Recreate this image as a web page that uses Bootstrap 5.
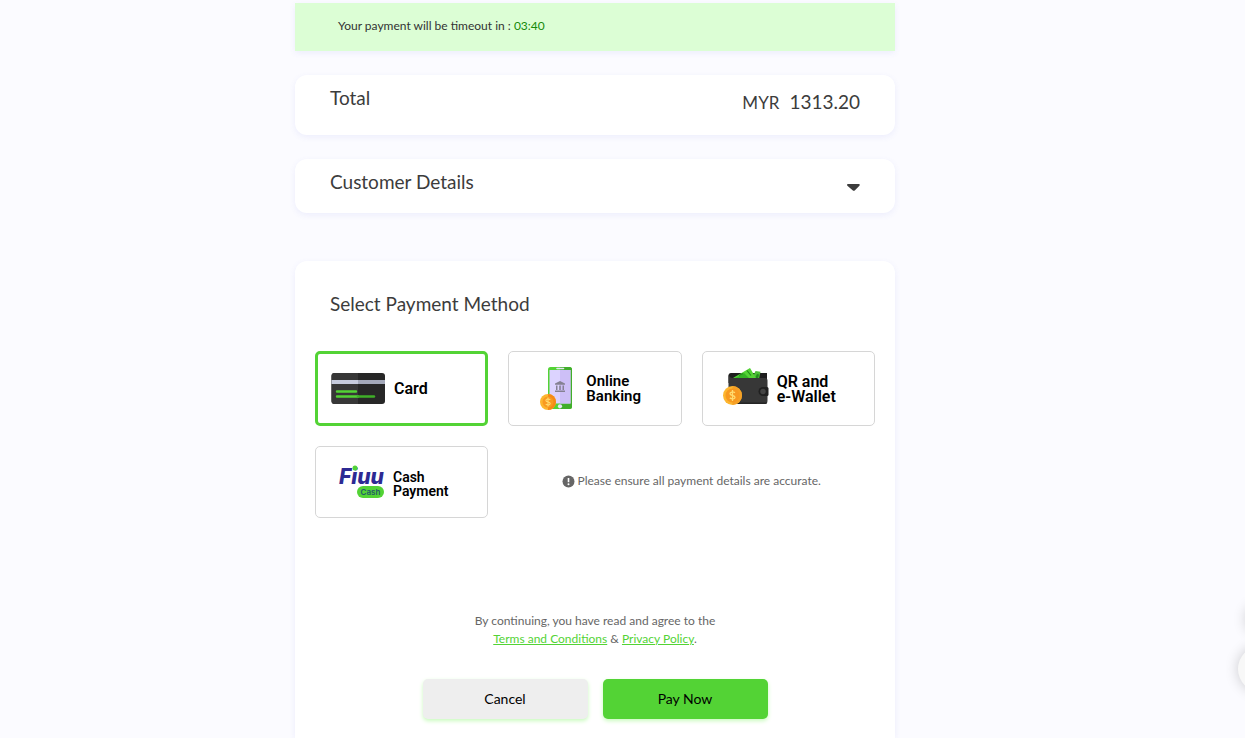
<!DOCTYPE html>
<html lang="en">
<head>
<meta charset="utf-8">
<meta name="viewport" content="width=device-width, initial-scale=1">
<title>Payment</title>
<link href="https://cdn.jsdelivr.net/npm/bootstrap@5.3.0/dist/css/bootstrap.min.css" rel="stylesheet">
<style>
  body { background: #fbfbff; color: #3c3c3c; font-family: Lato, "Liberation Sans", sans-serif; font-size: 12px; line-height: 18px; }
  .page { padding: 3px 55px 0 0; }
  .column { width: 100%; max-width: 600px; }
  .panel { background: #fff; border-radius: 12px; box-shadow: 0 2px 6px rgba(90, 100, 220, .09); }
  .timeout { background: #dcfed5; border-radius: 0; padding: 14px 43px; color: #333; min-height: 48px; }
  .timeout time { color: #168a0a; }
  .heading { font-size: 19px; line-height: 26px; font-weight: 400; margin: 0; }
  .total { padding: 10px 35px 16px; min-height: 60px; }
  .total .currency { font-size: 17px; margin-right: 10px; }
  .total .amount { font-size: 19px; line-height: 26px; }
  .details { padding: 10px 35px 16px; min-height: 54px; width: 100%; border: 0; color: inherit; text-align: left; }
  .methods { padding: 30px 20px 18px; border-radius: 12px 12px 0 0; }
  .methods .heading { padding: 0 15px; margin-bottom: 34px; }
  .option-grid { display: grid; grid-template-columns: repeat(3, 1fr); gap: 20px; }
  .option { height: 75px; border: 1px solid #d6d6d6; border-radius: 5px; color: #000; font: 500 16px/15px Roboto, sans-serif; cursor: pointer; }
  .option.compact { height: 72px; font-size: 14px; line-height: 14px; padding-top: 4px; }
  .option.tight { font-size: 15px; }
  .btn-check:checked + .option { border: 3px solid #53d335; }
  .option svg { flex: none; }
  .option b { font-weight: 600; }
  .option b span { display: block; }
  .pad-card { padding-left: 13px; gap: 9px; }
  .pad-bank { padding-left: 30px; gap: 13px; }
  .pad-wallet { padding-left: 20px; gap: 8px; }
  .pad-cash { padding-left: 22px; gap: 5px; }
  .note { grid-column: span 2; color: #666; gap: 2px; height: 70px; }
  .terms { color: #666; margin: 94px 0 31px; }
  .terms a { color: #53d335; }
  .action { width: 165px; height: 40px; border: 0; border-radius: 5px; font-size: 14px; color: #000; box-shadow: 0 2px 4px #c9fbbd; }
  .cancel { background: #eee; }
  .pay { background: #53d335; }
  .floating { right: -39px; bottom: 46px; gap: 12px; }
  .round { border: 0; border-radius: 50%; width: 46px; height: 46px; background: #f8f8f8; box-shadow: 0 0 14px rgba(0, 0, 0, .2); }
  .round.minor { width: 30px; height: 30px; }
</style>
</head>
<body>
<main class="page min-vh-100 d-flex justify-content-center">
  <div class="column d-flex flex-column">
    <div class="panel timeout mb-4">Your payment will be timeout in : <time>03:40</time></div>

    <section class="panel total d-flex justify-content-between mb-4">
      <h2 class="heading">Total</h2>
      <div class="d-flex align-items-baseline pt-1"><span class="currency">MYR</span><span class="amount">1313.20</span></div>
    </section>

    <button type="button" class="panel details d-flex justify-content-between mb-5" aria-expanded="false">
      <span class="heading">Customer Details</span>
      <svg class="mt-2" width="14" height="18" viewBox="0 0 14 18" aria-hidden="true"><path d="M2 7h10.800c1 0 1.300 1 .6 1.700L9 13.200q-1.200 1-2.400 0L1.400 8.700C.7 8 1 7 2 7Z" fill="#3c3c3c"/></svg>
    </button>

    <section class="panel methods flex-grow-1">
      <h2 class="heading">Select Payment Method</h2>
      <div class="option-grid">
        <div>
          <input class="btn-check" type="radio" name="method" id="m-card" checked>
          <label class="option pad-card d-flex align-items-center" for="m-card">
            <svg width="54" height="32" viewBox="0 0 54 32" aria-hidden="true">
              <rect x=".5" width="53.500" height="31" rx="3" fill="#272727"/><path d="M3.500 0H27v31H3.500a3 3 0 0 1-3-3V3a3 3 0 0 1 3-3Z" fill="#373737"/>
              <path d="M.5 7H27v4H.5z" fill="#c6cbdd"/><path d="M27 7h27v4H27z" fill="#a3a8b9"/>
              <path d="M6 18.500h19M6 23.500h21" stroke="#53d335" stroke-width="2.400" stroke-linecap="round"/><path d="M27 23.500h16" stroke="#3fae28" stroke-width="2.400" stroke-linecap="round"/>
            </svg><b>Card</b>
          </label>
        </div>
        <div>
          <input class="btn-check" type="radio" name="method" id="m-bank">
          <label class="option tight pad-bank d-flex align-items-center" for="m-bank">
            <svg width="34" height="46" viewBox="0 0 34 46" aria-hidden="true">
              <rect x="9" y="1" width="24" height="42" rx="2.500" fill="#53d335"/><path d="M21 1h9.500A2.500 2.500 0 0 1 33 3.500v37a2.500 2.500 0 0 1-2.500 2.500H21z" fill="#41ae2b"/>
              <path d="M10.500 4h21v33.500h-21z" fill="#dcd3ff"/><path d="M21 4h10.500v33.500H21z" fill="#cdbff7"/>
              <path d="M18 2.500h6.500" stroke="#e7e5f5" stroke-width="1.600" stroke-linecap="round"/><circle cx="21" cy="40.300" r="2.100" fill="#e8e4fa"/>
              <path d="m21 15 5 2.500v1.200H16v-1.200ZM17 19.500h1.500V24H17zm3.200 0h1.600V24h-1.600zm3.300 0H25V24h-1.500zM16 24.500h10V26H16z" fill="#858193"/>
              <circle cx="9" cy="36" r="8" fill="#fdb62f"/><path d="M9 28a8 8 0 0 1 0 16Z" fill="#f58a18"/><circle cx="9" cy="36" r="5.500" fill="#f99a20"/>
              <path d="M11.300 33.800C9.500 32.500 6.900 32.900 6.900 34.500c0 2 4.300 1 4.300 3 0 1.700-2.700 1.900-4.500.6M9 31.500v9" fill="none" stroke="#ffdc70" stroke-width="1.100"/>
            </svg><b><span>Online</span><span>Banking</span></b>
          </label>
        </div>
        <div>
          <input class="btn-check" type="radio" name="method" id="m-wallet">
          <label class="option pad-wallet d-flex align-items-center" for="m-wallet">
            <svg width="46" height="43" viewBox="0 0 46 43" aria-hidden="true">
              <path d="M8 6h36v10H5.500V8.500Q5.500 6 8 6Z" fill="#1e1e1e"/>
              <path d="m29 12 3.500-8 5 .8L36 12Z" fill="#4abe35"/><path d="m32 11 2-4 2 .5-1 4Z" fill="#218b1b"/>
              <path d="M10 11 27 1l6 10Z" fill="#53d335"/><path d="M12 11q5-2 9-5l5 5Z" fill="#35b326"/><path d="m24 3.500 4 5m-12 0 4-2" stroke="#218b1b" stroke-width="1.200"/>
              <path d="M5.500 8c1 2.500 3 3 6 3H42q2.500 0 2.500 2.500v20Q44.500 37 42 37H9q-3.500 0-3.500-3.500Z" fill="#373737"/><path d="M5.500 32q0 3.500 3.500 3.500h35.300Q43.500 37 42 37H9q-3.500 0-3.500-3.500Z" fill="#252525"/>
              <path d="M40 20h4q1.500 0 1.500 1.500v6Q45.500 29 44 29h-4a4.500 4.500 0 0 1 0-9Z" fill="#202020"/><circle cx="40" cy="24.500" r="2.700" fill="#444"/>
              <circle cx="9.500" cy="28.500" r="9.500" fill="#fdb62f"/><path d="M9.500 19a9.500 9.500 0 0 1 0 19Z" fill="#f6a125"/><circle cx="9.500" cy="28.500" r="7" fill="#f79920"/>
              <path d="M12 25.800c-2-1.500-5-.9-5 1 0 2.400 5 1 5 3.400 0 2-3 2.200-5.200.7M9.500 23v11" fill="none" stroke="#ffdc70" stroke-width="1.300"/>
            </svg><b><span>QR and</span><span>e-Wallet</span></b>
          </label>
        </div>
        <div>
          <input class="btn-check" type="radio" name="method" id="m-cash">
          <label class="option compact pad-cash d-flex align-items-center" for="m-cash">
            <svg width="50" height="38" viewBox="0 0 50 38" aria-hidden="true">
              <text x="1" y="19" font-family="Inter, sans-serif" font-size="21" font-weight="800" font-style="italic" fill="#2d2a93">Fiuu</text>
              <circle cx="17" cy="3" r="2.500" fill="#53d335"/>
              <rect x="19" y="21" width="27" height="12" rx="6" fill="#53d335"/>
              <text x="32.500" y="30" text-anchor="middle" font-family="Inter, sans-serif" font-size="8" font-weight="600" fill="#24586a">Cash</text>
            </svg><b><span>Cash</span><span>Payment</span></b>
          </label>
        </div>
        <div class="note d-flex align-items-center justify-content-center">
          <svg width="13" height="13" viewBox="0 0 13 13" aria-hidden="true"><circle cx="6.500" cy="6.500" r="6" fill="#666"/><path d="M6.500 3v4.200" stroke="#fff" stroke-width="1.600"/><circle cx="6.500" cy="9.300" r="1" fill="#fff"/></svg>
          <span>Please ensure all payment details are accurate.</span>
        </div>
      </div>

      <p class="terms text-center">By continuing, you have read and agree to the<br><a href="#terms">Terms and Conditions</a> &amp; <a href="#privacy">Privacy Policy</a>.</p>
      <div class="d-flex justify-content-center" style="gap: 15px">
        <button type="button" class="action cancel">Cancel</button>
        <button type="submit" class="action pay">Pay Now</button>
      </div>
    </section>
  </div>
</main>
<div class="floating position-fixed d-flex flex-column align-items-center">
  <button type="button" class="round minor" aria-label="Close chat"></button>
  <button type="button" class="round" aria-label="Open chat"></button>
</div>
<script src="https://cdn.jsdelivr.net/npm/bootstrap@5.3.0/dist/js/bootstrap.bundle.min.js"></script>
</body>
</html>
